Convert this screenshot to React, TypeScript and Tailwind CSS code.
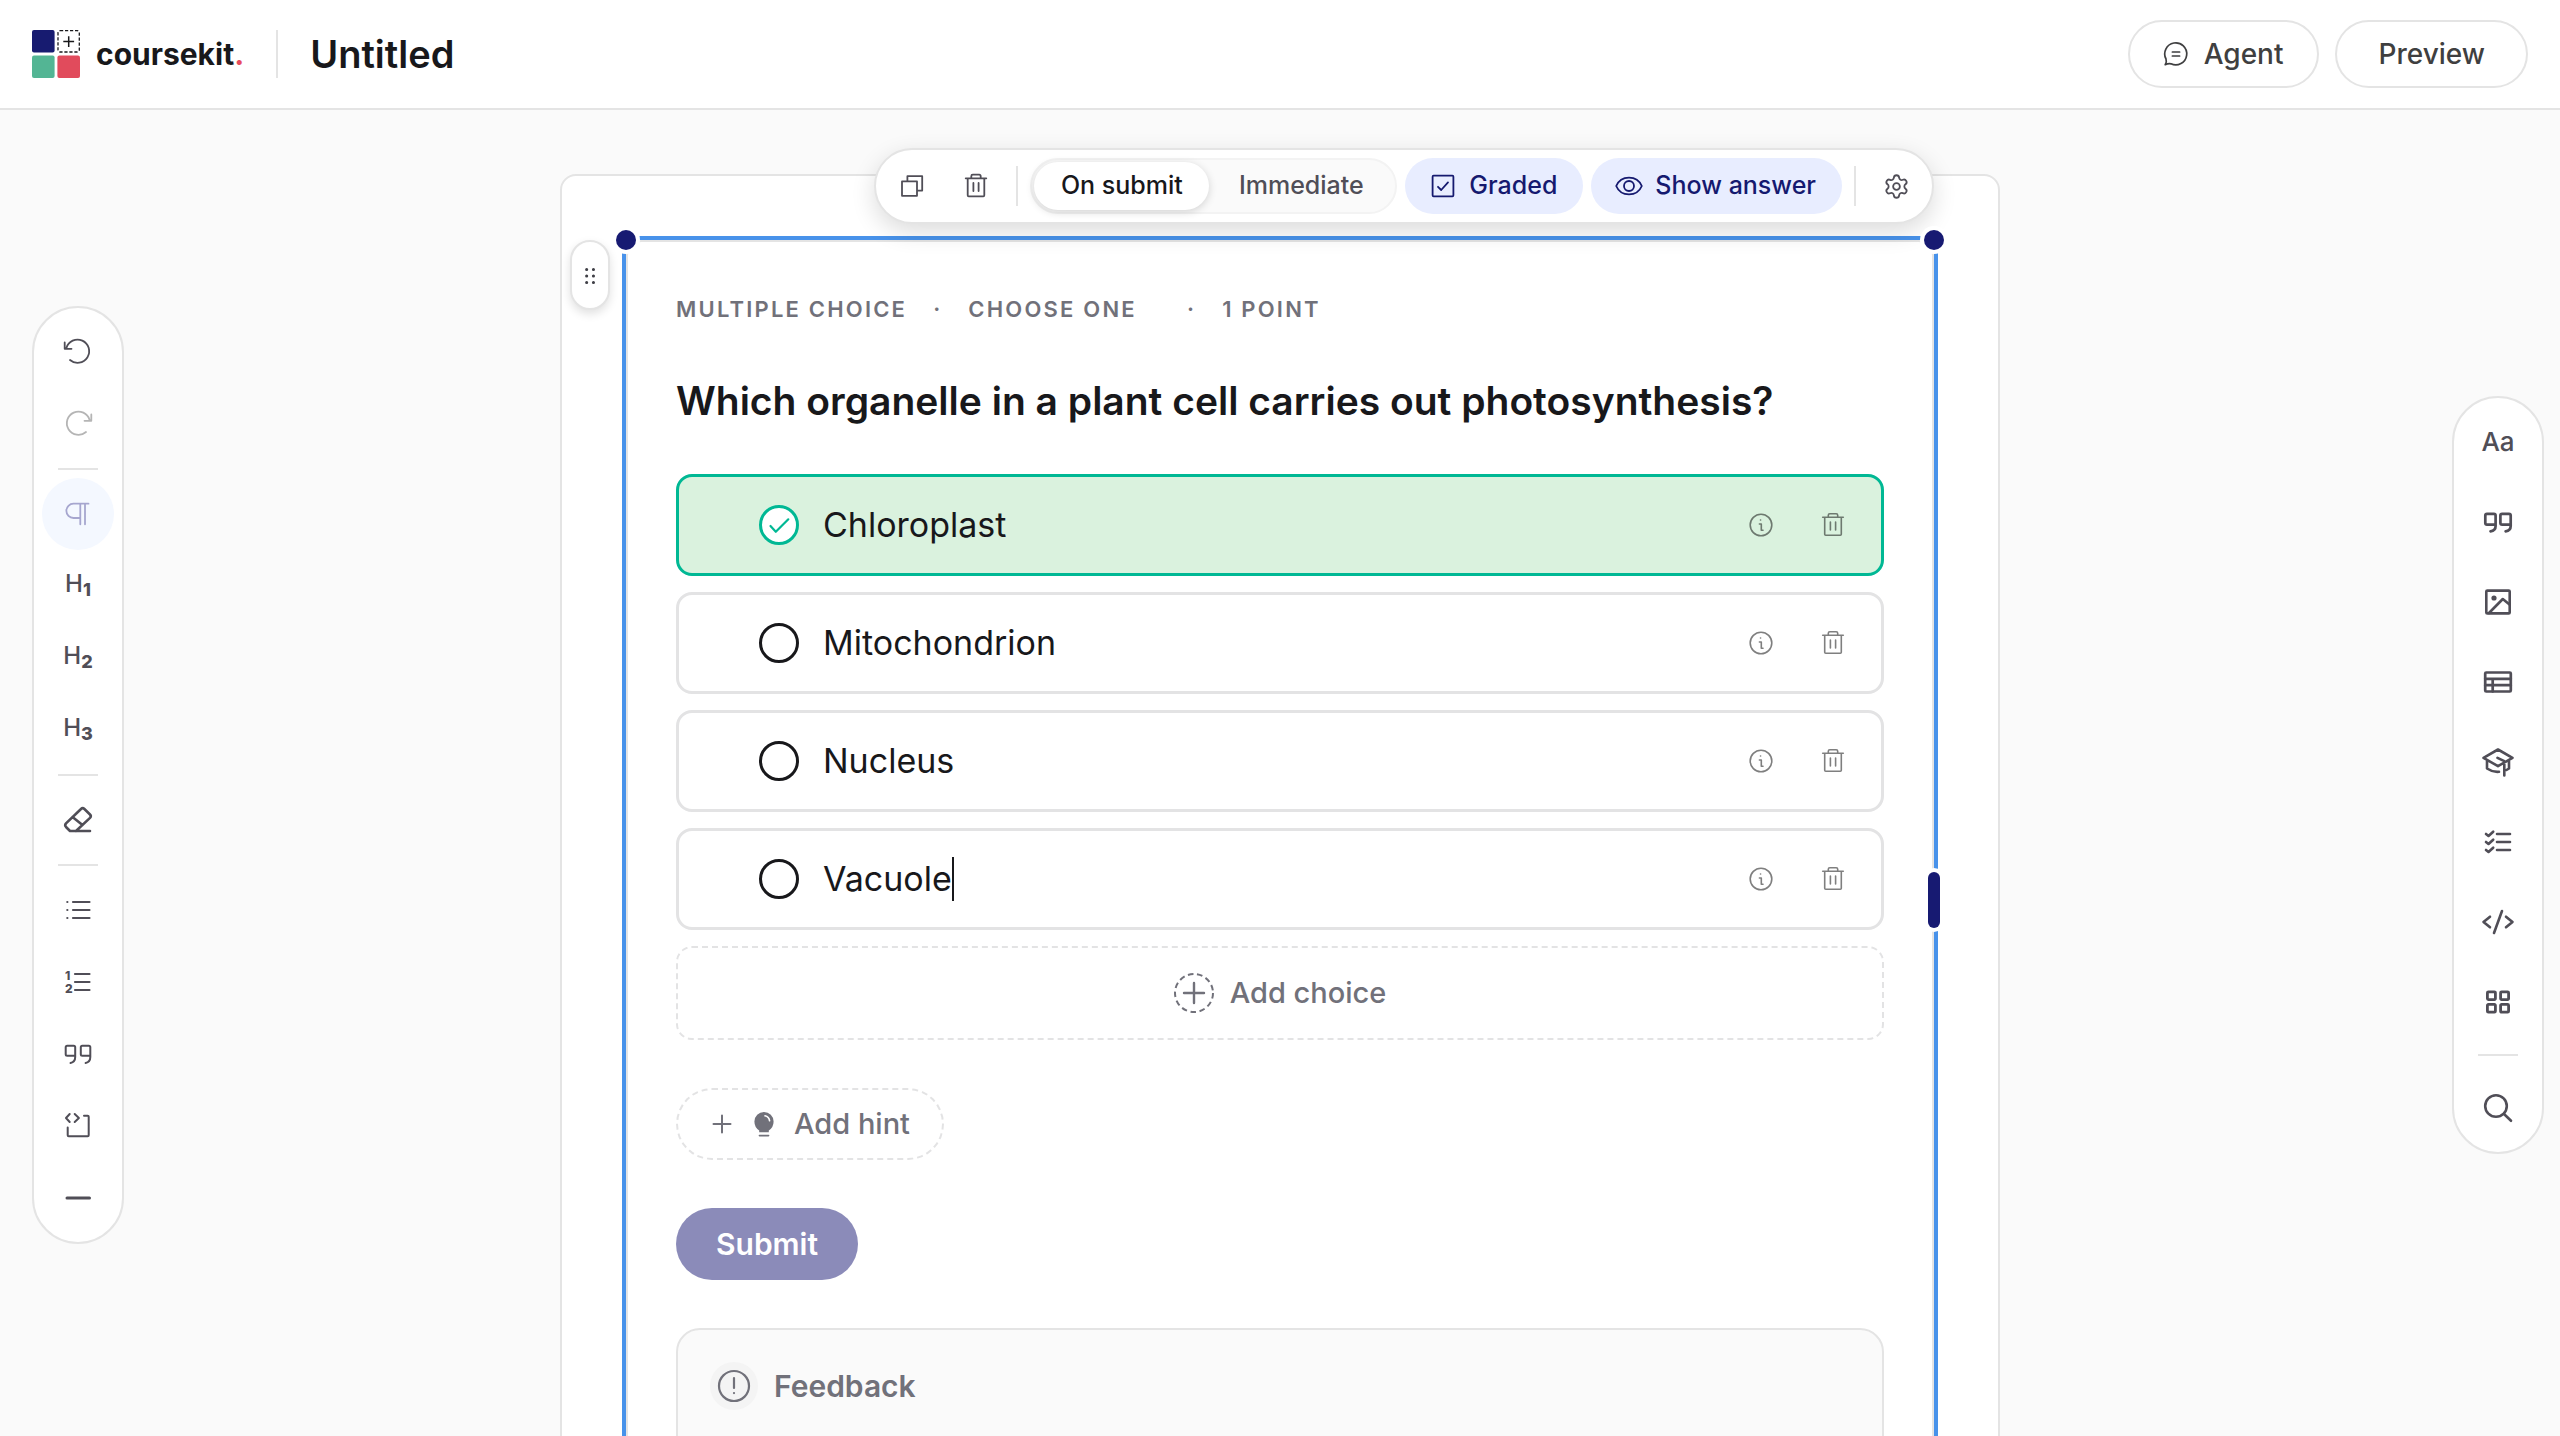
import React, { useState } from "react";
import { Settings } from "lucide-react";

type IconProps = {
  children: React.ReactNode;
  width?: number;
};

// every icon is drawn around its own centre point
const Icon: React.FC<IconProps> = ({ children, width = 2 }) => (
  <svg
    viewBox="-12 -12 24 24"
    className="size-6 shrink-0 overflow-visible"
    fill="none"
    stroke="currentColor"
    strokeWidth={width}
    strokeLinecap="round"
    strokeLinejoin="round"
    aria-hidden="true"
  >
    {children}
  </svg>
);

const TrashIcon: React.FC<{ width?: number }> = ({ width = 1.8 }) => (
  <Icon width={width}>
    <path d="M-10.3 -7.7H10.3M-8.3 -7.7V9.3Q-8.3 10.3 -7.3 10.3H7.3Q8.3 10.3 8.3 9.3V-7.7M-4.7 -8V-9.8Q-4.7 -11.3 -3.2 -11.3H3.2Q4.7 -11.3 4.7 -9.8V-8M-2.6 -3V5M2.6 -3V5" />
  </Icon>
);

const HeadingIcon: React.FC<{ level: string }> = ({ level }) => (
  <span className="flex items-baseline pb-1 leading-6">
    <span className="text-[24px] font-medium">H</span>
    <sub className="bottom-[-4px] text-[18px] font-extrabold leading-none">{level}</sub>
  </span>
);

type Tool = {
  name: string;
  icon?: React.ReactNode;
  className?: string;
};

const formatTools: (Tool | null)[] = [
  { name: "Undo", icon: <Icon width={1.8}><path d="M-13.3 -9.5V-3.2H-6.5M-11.6 -4A11.6 11.6 0 1 1 -8 8" /></Icon> },
  { name: "Redo", className: "text-[#b5b5b5]", icon: <Icon width={1.8}><path d="M13.3 -9.5V-3.2H6.5M11.6 -4A11.6 11.6 0 1 0 8 8" /></Icon> },
  null,
  { name: "Paragraph", className: "bg-[#f4f8ff] text-[#a6a6cf]", icon: <Icon width={1.8}><path d="M10.5 -10.3H-4.5A7 7 0 0 0 -4.5 4H2.3M2.3 -10.3V10.3M7 -10.3V10.3" /></Icon> },
  { name: "Heading 1", icon: <HeadingIcon level="1" /> },
  { name: "Heading 2", icon: <HeadingIcon level="2" /> },
  { name: "Heading 3", icon: <HeadingIcon level="3" /> },
  null,
  { name: "Clear formatting", icon: <Icon width={2.6}><path d="M12 11H-8L-12 7Q-13.6 5.2 -12 3.4L3 -11Q4.7 -12.6 6.4 -11L12 -5.5Q13.6 -3.8 12 -2.1L-2 11M-5.5 -3L4.5 5" /></Icon> },
  null,
  { name: "Bullet list", icon: <Icon width={2.2}><path d="M-5 -8H11.5M-5 0H11.5M-5 8H11.5M-10.7 -8h.1M-10.7 0h.1M-10.7 8h.1" /></Icon> },
  {
    name: "Numbered list",
    icon: (
      <Icon width={2.2}>
        <path d="M-3 -8H11.5M-3 0H11.5M-3 8H11.5" />
        <g fill="currentColor" stroke="none" fontSize="12" fontWeight="800">
          <text x="-13" y="-2">1</text>
          <text x="-13" y="11">2</text>
        </g>
      </Icon>
    ),
  },
  { name: "Quote", icon: <Icon><path d="M-2.8 1.7H-10.8Q-12.3 1.7 -12.3 .2V-6.8Q-12.3 -8.3 -10.8 -8.3H-4.3Q-2.8 -8.3 -2.8 -6.8V3Q-2.8 8 -7.5 9M12.3 1.7H4.3Q2.8 1.7 2.8 .2V-6.8Q2.8 -8.3 4.3 -8.3H10.8Q12.3 -8.3 12.3 -6.8V3Q12.3 8 7.6 9" /></Icon> },
  { name: "Code block", icon: <Icon><path d="M-8.3 -12L-12 -8L-8.3 -4M-3.3 -12L.9 -8L-3.3 -4M-10.3 1.5V9.3Q-10.3 10.3 -9.3 10.3H9.7Q10.7 10.3 10.7 9.3V-9.3Q10.7 -10.3 9.7 -10.3H6" /></Icon> },
  { name: "Divider", icon: <Icon width={3}><path d="M-11 0H11.5" /></Icon> },
];

const blockTools: (Tool | null)[] = [
  { name: "Text", icon: <span className="text-[26px] font-medium leading-6">Aa</span> },
  { name: "Quote block", icon: <Icon width={2.7}><path d="M-2.4 2.6H-11Q-12.7 2.6 -12.7 .9V-6.5Q-12.7 -8.2 -11 -8.2H-4.1Q-2.4 -8.2 -2.4 -6.5V4Q-2.4 8.6 -7.5 9.4M12.7 2.6H4.1Q2.4 2.6 2.4 .9V-6.5Q2.4 -8.2 4.1 -8.2H11Q12.7 -8.2 12.7 -6.5V4Q12.7 8.6 7.6 9.4" /></Icon> },
  { name: "Image", icon: <Icon width={2.6}><rect x="-11.7" y="-11.4" width="23.4" height="22.8" rx="1" /><circle cx="-4" cy="-4" r="1.3" fill="currentColor" /><path d="M-9 11L4.8 -3L11.5 2.5" /></Icon> },
  { name: "Table", icon: <Icon width={2.7}><rect x="-12.8" y="-9.5" width="25.6" height="19" rx="1" /><path d="M-12.8 -3.2H12.8M-12.8 3.2H12.8M-5.3 -3.2V9.5" /></Icon> },
  { name: "Quiz", icon: <Icon width={2.6}><path d="M-14.5 -4.2L0 -12.5L14.5 -4.2L0 4.2ZM-11 -1V6.5Q-5 10.5 1 9.8M11 -1V6.5L8.5 8M-.5 -4.2L6.3 -.8V13.5" /></Icon> },
  { name: "Checklist", icon: <Icon width={2.6}><path d="M-1 -8H12M-1 0H12M-1 8H12M-12 -8L-9.5 -6L-4.8 -10.3M-12 0L-9.5 2L-4.8 -2.3M-12 8L-9.5 10L-4.8 5.7" /></Icon> },
  { name: "Code", icon: <Icon width={2.6}><path d="M-8 -5.3L-14.5 0L-8 5.3M8 -5.3L14.5 0L8 5.3M4 -11L-4 11" /></Icon> },
  { name: "Grid", icon: <Icon width={2.8}><rect x="-10.6" y="-10.2" width="8" height="7.8" rx="1" /><rect x="2.6" y="-10.2" width="8" height="7.8" rx="1" /><rect x="-10.6" y="2.4" width="8" height="7.8" rx="1" /><rect x="2.6" y="2.4" width="8" height="7.8" rx="1" /></Icon> },
  null,
  { name: "Search", icon: <Icon width={2.6}><circle cx="-2" cy="-2" r="10.8" /><path d="M6 6L13 12.8" /></Icon> },
];

const choices = ["Chloroplast", "Mitochondrion", "Nucleus", "Vacuole"];

const ToolButton: React.FC<{ tool: Tool }> = ({ tool }) => (
  <button
    type="button"
    aria-label={tool.name}
    className={`flex size-18 items-center justify-center rounded-full ${tool.className ?? ""}`}
  >
    {tool.icon}
  </button>
);

const Header: React.FC = () => (
  <header className="flex shrink-0 items-center justify-between border-b-2 border-[#e4e4e4] bg-white px-8 py-5">
    <div className="flex items-center gap-8">
      <a href="#" className="flex items-center gap-4">
        <svg viewBox="0 0 48 48" className="size-12" aria-hidden="true">
          <rect width="22.6" height="22.6" rx="2" fill="#171b70" />
          <rect y="25.4" width="22.6" height="22.6" rx="2" fill="#53b594" />
          <rect x="25.4" y="25.4" width="22.6" height="22.6" rx="2" fill="#e14b5c" />
          <rect x="26" y=".7" width="21.3" height="21.3" rx="2" fill="none" stroke="#18181b" strokeWidth="1.3" strokeDasharray="3.2 1.8" />
          <path d="M36.7 6.2V17M31.3 11.6H42.1" stroke="#18181b" strokeWidth="1.5" />
        </svg>
        <span className="text-[30px] font-bold leading-10">
          coursekit<span className="text-[#e84c5e]">.</span>
        </span>
      </a>
      <div className="h-12 w-0.5 bg-[#e4e4e4]" />
      <h1 className="text-[38px] font-semibold leading-12">Untitled</h1>
    </div>
    <div className="flex gap-4 text-[28px] font-medium text-[#3f3f40]">
      <button type="button" className="flex h-17 items-center gap-4 rounded-full border-2 border-[#e4e4e4] px-[34px]">
        <Icon width={1.7}>
          <path d="M-10.8 10.7Q-9 8 -10 5A11 11 0 1 1 -5 9.8Q-8 9.4 -10.8 10.7ZM-3.6 -2H3.6M-3.6 2H3.6" />
        </Icon>
        Agent
      </button>
      <button type="button" className="h-17 rounded-full border-2 border-[#e4e4e4] px-[41px]">Preview</button>
    </div>
  </header>
);

const Sidebar: React.FC<{ label: string; tools: (Tool | null)[]; className: string }> = ({ label, tools, className }) => (
  <nav
    aria-label={label}
    className={`mt-1 flex flex-col items-center self-center rounded-full border-2 border-[#e4e4e4] bg-white p-2 text-[#504e57] ${className}`}
  >
    {tools.map((tool, i) =>
      tool ? <ToolButton key={tool.name} tool={tool} /> : <div key={i} className="my-2 h-0.5 w-10 bg-[#e4e4e4]" />
    )}
  </nav>
);

const BlockToolbar: React.FC = () => (
  <div className="absolute -top-23 right-0 z-10 flex items-center gap-2 whitespace-nowrap rounded-full border-2 border-[#e4e4e4] bg-white p-2 text-[25px] font-medium text-[#504e57] shadow-[0_8px_24px_rgba(0,0,0,0.14)]">
    <button type="button" aria-label="Duplicate" className="flex size-14 items-center justify-center">
      <Icon width={1.8}>
        <path d="M-10 -4.6H5V9.8H-10ZM-4.6 -4.6V-9.8H10.2V4.6H5" />
      </Icon>
    </button>
    <button type="button" aria-label="Delete block" className="flex size-14 items-center justify-center">
      <TrashIcon />
    </button>
    <div className="mx-1 h-10 w-0.5 bg-[#e4e4e4]" />
    <div className="flex rounded-full border-2 border-[#f3f3f3] bg-[#fafafa] p-0.5">
      <button type="button" className="h-12 min-w-[175px] rounded-full bg-white px-6 text-[#18181b] shadow-[0_2px_8px_rgba(0,0,0,0.16)]">
        On submit
      </button>
      <button type="button" className="h-12 min-w-[184px] rounded-full px-6">Immediate</button>
    </div>
    <button type="button" className="flex h-14 items-center gap-3.5 rounded-full bg-[#e8edff] px-[26px] text-[#15196f]">
      <Icon width={1.8}>
        <rect x="-10.4" y="-10.3" width="20.8" height="20.6" rx="1" />
        <path d="M-5 .8L-1.8 4L5 -3.6" />
      </Icon>
      Graded
    </button>
    <button type="button" className="flex h-14 items-center gap-3.5 rounded-full bg-[#e8edff] px-[26px] text-[#15196f]">
      <Icon width={1.8}>
        <path d="M-12.8 0C-8 -11.2 8 -11.2 12.8 0C8 11.2 -8 11.2 -12.8 0Z" />
        <circle r="5" />
      </Icon>
      Show answer
    </button>
    <div className="mx-1 h-10 w-0.5 bg-[#e4e4e4]" />
    <button type="button" aria-label="Block settings" className="flex size-14 items-center justify-center">
      <Settings size={27} strokeWidth={1.6} />
    </button>
  </div>
);

const SelectionFrame: React.FC = () => (
  <>
    <div className="pointer-events-none absolute -inset-1 border-4 border-[#4892ea]" />
    <div className="absolute -left-2.5 -top-2.5 size-5 rounded-full bg-[#171a72] ring-4 ring-white" />
    <div className="absolute -right-2.5 -top-2.5 z-20 size-5 rounded-full bg-[#171a72] ring-4 ring-white" />
    <div className="absolute -right-1.5 top-1/2 h-14 w-3 -translate-y-1/2 rounded-full bg-[#171a72] ring-4 ring-white" />
    <button
      type="button"
      aria-label="Drag block"
      className="absolute -left-14 top-0 flex h-[70px] w-10 items-center justify-center rounded-full border-2 border-[#e4e4e4] bg-white text-[#3f3f46] shadow-[0_4px_10px_rgba(0,0,0,0.12)]"
    >
      <Icon width={3}>
        <path d="M-3.4 -5.5h.1M3.4 -5.5h.1M-3.4 1h.1M3.4 1h.1M-3.4 7.5h.1M3.4 7.5h.1" />
      </Icon>
    </button>
  </>
);

const App: React.FC = () => {
  const [answer, setAnswer] = useState("Chloroplast");

  return (
    <div className="flex h-screen flex-col overflow-hidden bg-[#fafafa] font-['Inter',sans-serif] text-[#18181b]">
      <Header />

      <main className="grid min-h-0 flex-1 grid-cols-[1fr_minmax(0,1440px)_1fr] grid-rows-[minmax(0,1fr)]">
        <Sidebar label="Formatting" tools={formatTools} className="ml-8 justify-self-start" />

        {/* Page */}
        <div className="mt-16 self-start rounded-2xl border-2 border-[#e4e4e4] bg-white p-16">
          <section className="relative">
            <div className="rounded-2xl border-2 border-[#e4e4e4] bg-white p-12">
              <p className="flex gap-[26px] text-[22px] font-semibold uppercase leading-[38px] tracking-widest text-[#71717a]">
                <span>Multiple choice</span>
                <span>·</span>
                <span className="pr-6">Choose one</span>
                <span>·</span>
                <span>1 point</span>
              </p>
              <h2 className="mt-11 text-[39px] font-semibold leading-[58px]">
                Which organelle in a plant cell carries out photosynthesis?
              </h2>

              {/* Choices */}
              <div className="mt-11 flex flex-col gap-4">
                {choices.map((choice) => {
                  const correct = choice === answer;
                  return (
                    <div
                      key={choice}
                      className={`flex items-center rounded-2xl border-3 py-5 pl-20 pr-5 ${
                        correct ? "border-[#00b894] bg-[#daf2de]" : "border-[#e3e3e4] bg-white"
                      }`}
                    >
                      <span className="relative flex size-10 items-center justify-center">
                        <input
                          type="radio"
                          name="answer"
                          aria-label={`Mark ${choice} as correct`}
                          checked={correct}
                          onChange={() => setAnswer(choice)}
                          className="size-10 appearance-none rounded-full border-3 border-[#18181b] bg-white checked:border-[#00b894]"
                        />
                        {correct && (
                          <span className="pointer-events-none absolute text-[#00b894]">
                            <Icon width={2.2}>
                              <path d="M-8.5 1L-3.2 6.8L9.3 -5.7" />
                            </Icon>
                          </span>
                        )}
                      </span>
                      <div className="flex flex-1 items-center pl-6">
                        <input
                          type="text"
                          aria-label="Choice text"
                          defaultValue={choice}
                          className="field-sizing-content text-[34px] leading-12 outline-none"
                        />
                        {choice === "Vacuole" && <span className="h-11 w-0.5 bg-[#18181b]" />}
                      </div>
                      <div className="flex gap-4 text-black/50">
                        <button type="button" aria-label={`Explain ${choice}`} className="flex size-14 items-center justify-center">
                          <Icon width={1.6}>
                            <circle r="10.8" />
                            <path d="M-1.6 -1H.3V5.3H2M-.5 -5h.1" />
                          </Icon>
                        </button>
                        <button type="button" aria-label={`Delete ${choice}`} className="flex size-14 items-center justify-center">
                          <TrashIcon width={1.6} />
                        </button>
                      </div>
                    </div>
                  );
                })}
                <button
                  type="button"
                  className="flex h-[94px] items-center justify-center gap-4 rounded-2xl border-2 border-dashed border-[#e3e3e4] text-[29px] font-medium text-[#71717a]"
                >
                  <span className="flex size-10 items-center justify-center">
                    <Icon width={2.4}>
                      <circle r="19" strokeWidth="2" strokeDasharray="5.6 3.6" strokeLinecap="butt" />
                      <path d="M-10 0H10M0 -10V10" />
                    </Icon>
                  </span>
                  Add choice
                </button>
              </div>

              <button
                type="button"
                className="mt-12 flex h-18 items-center gap-4.5 rounded-full border-2 border-dashed border-[#e3e3e4] px-8 text-[29px] font-medium text-[#71717a]"
              >
                <Icon>
                  <path d="M-8.5 0H8.5M0 -8.5V8.5" />
                </Icon>
                <Icon width={1.6}>
                  <path d="M-4.8 8.2V6.6Q-9.6 3.4 -9.6 -2.4A9.6 9.6 0 0 1 9.6 -2.4Q9.6 3.4 4.8 6.6V8.2Z" fill="currentColor" stroke="none" />
                  <path d="M-4.6 11.6H4.6" />
                  <path d="M1 -8.2Q5 -7.4 5.6 -3.2" stroke="white" />
                </Icon>
                Add hint
              </button>

              <button type="submit" className="mt-12 block h-18 rounded-full bg-[#8b8bb9] px-10 text-[30px] font-semibold text-white">
                Submit
              </button>

              {/* Feedback */}
              <div className="mt-12 flex min-h-[182px] items-start gap-4 rounded-3xl border-2 border-[#e4e4e4] bg-[#fafafa] p-8 text-[30px] font-semibold leading-12 text-[#71717a]">
                <span className="flex size-12 items-center justify-center rounded-full bg-[#f4f4f4]">
                  <Icon width={2.2}>
                    <circle r="15" />
                    <path d="M0 -8V2M0 7v.1" />
                  </Icon>
                </span>
                Feedback
              </div>
            </div>
            <SelectionFrame />
            <BlockToolbar />
          </section>
        </div>

        <Sidebar label="Blocks" tools={blockTools} className="mr-4 gap-2 justify-self-end" />
      </main>
    </div>
  );
};

export default App;
